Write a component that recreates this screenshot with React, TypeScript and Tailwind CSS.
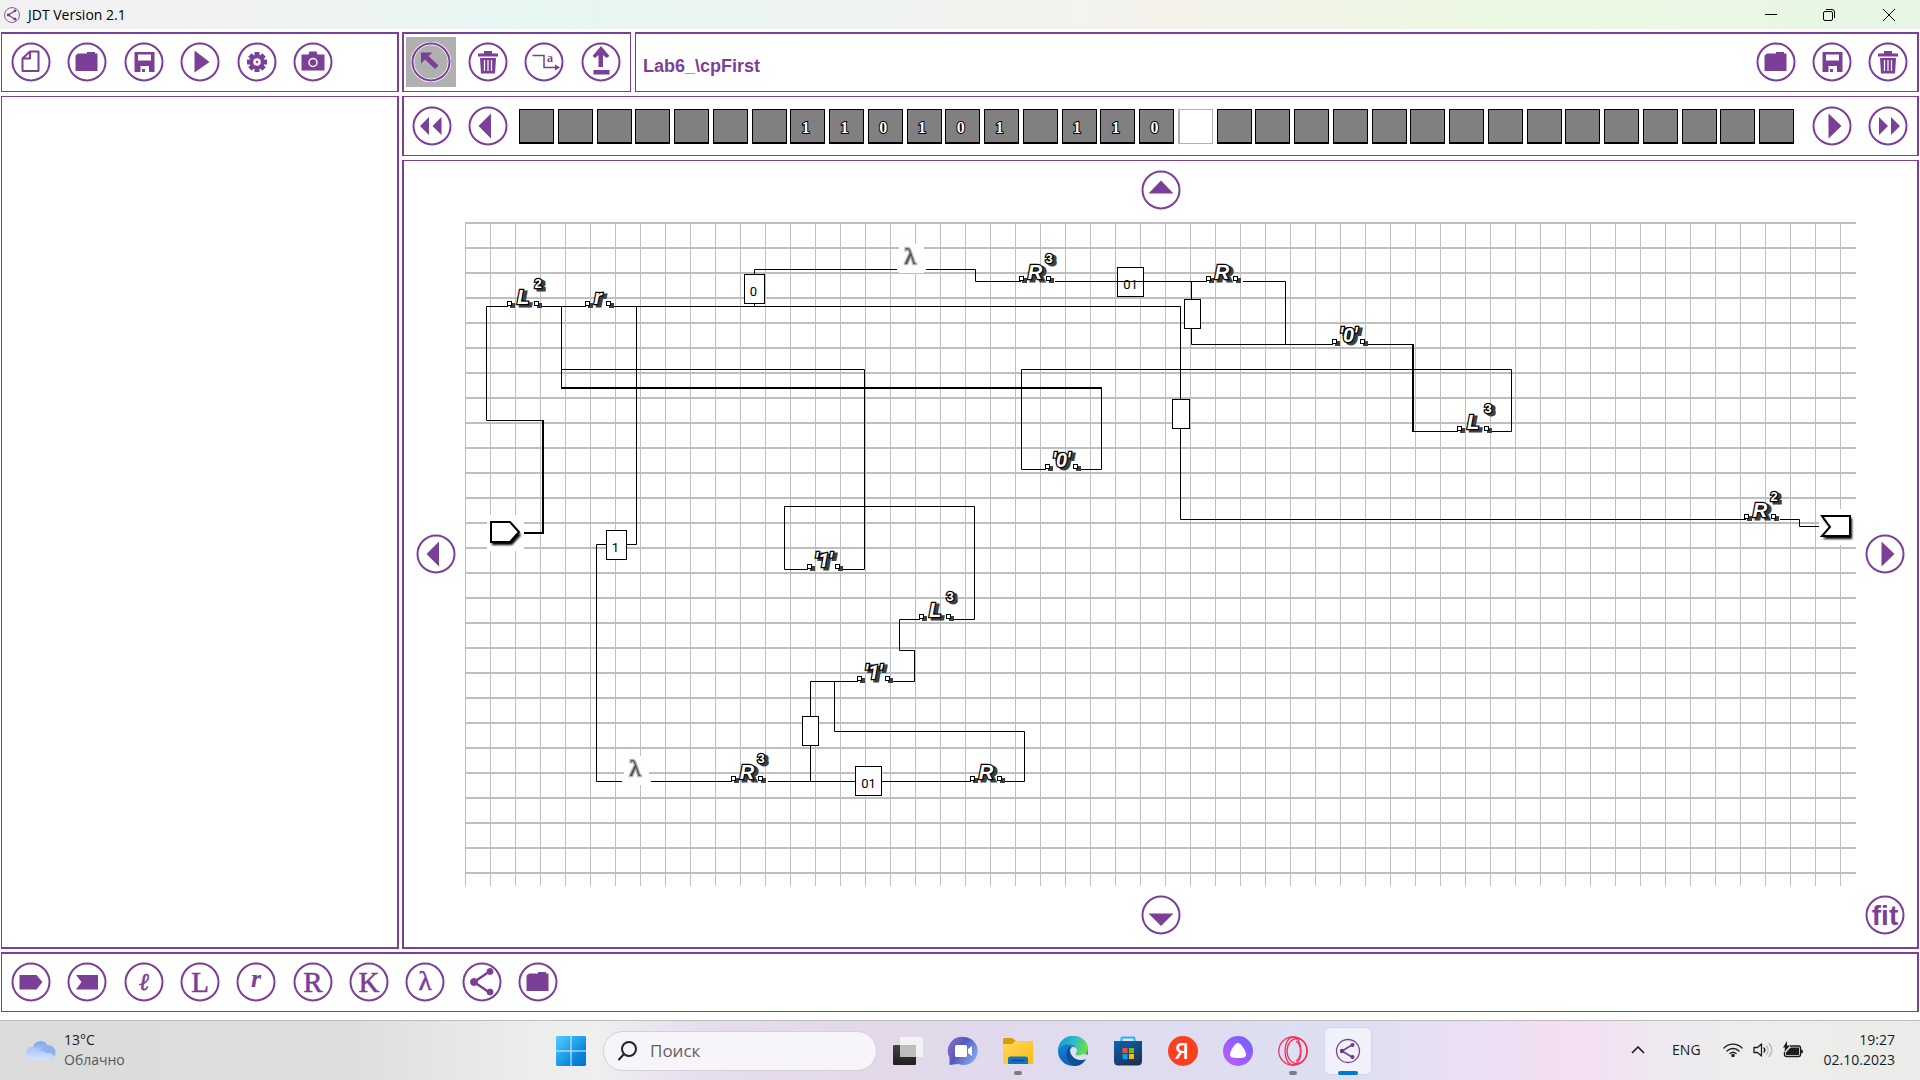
import React from "react";

const PURPLE = "#7c3f98";

type IconName =
  | "new" | "folder" | "save" | "play" | "gear" | "camera" | "arrow" | "trash" | "link" | "upload"
  | "rewind" | "back" | "forward" | "fastForward" | "up" | "down" | "start" | "end" | "share"
  | "ell" | "L" | "r" | "R" | "K" | "lambda" | "fit";

const GEAR_TEETH = [0, 45, 90, 135, 180, 225, 270, 315];

function Glyph({ text, size, y, bold, italic, sans }: { text: string; size: number; y: number; bold?: boolean; italic?: boolean; sans?: boolean }) {
  return (
    <text
      x="20"
      y={y}
      fontSize={size}
      textAnchor="middle"
      fill={PURPLE}
      stroke={PURPLE}
      strokeWidth={bold ? 0 : 0.6}
      fontWeight={bold ? 700 : 400}
      fontStyle={italic ? "italic" : "normal"}
      fontFamily={sans ? '"Liberation Sans", sans-serif' : '"Liberation Serif", serif'}
    >
      {text}
    </text>
  );
}

const ART: Record<IconName, React.ReactNode> = {
  new: <path d="M19 9.5h8.5v19.5h-16v-12.500z M19 9.500v7h-7.500" fill="none" stroke={PURPLE} strokeWidth="2" strokeLinejoin="round" />,
  folder: <path d="M20 11.500v-1.500h8v1.500h2.500v17.500H8.500v-15.500l2.500-2z" fill={PURPLE} />,
  save: (
    <g>
      <path d="M10.500 10h20v20h-20z" fill={PURPLE} />
      <path d="M14 12.500h13v6H14z M16.500 24h8.500v6h-8.500z" fill="#fff" />
      <path d="M18 27h3v3h-3z" fill={PURPLE} />
    </g>
  ),
  play: <path d="M14.500 8.500v22L29.500 20z" fill={PURPLE} />,
  gear: (
    <g fill={PURPLE}>
      {GEAR_TEETH.map((a) => (
        <rect key={a} x="17.500" y="10" width="5" height="5" transform={`rotate(${a} 20 20)`} />
      ))}
      <circle cx="20" cy="20" r="5.500" fill="none" stroke={PURPLE} strokeWidth="3.500" />
      <circle cx="20" cy="20" r="1.200" />
    </g>
  ),
  camera: (
    <g>
      <path d="M8.500 12.500h7l1-3h7l1 3h7v16h-23z" fill={PURPLE} />
      <circle cx="20" cy="20.500" r="4" fill={PURPLE} stroke="#fff" strokeWidth="1.500" />
    </g>
  ),
  arrow: <path d="M10 10.500h11.500l-4 3.500 10 9.500-3.500 3.500-10-9.500-4 4z" fill={PURPLE} />,
  trash: (
    <g>
      <path d="M10 11.500h6v-2.500h8v2.500h6v3h-20z" fill={PURPLE} />
      <path d="M12 16h16l-1 15.500h-14z" fill={PURPLE} />
      <path d="M16.500 18v11 M20 18v11 M23.500 18v11" stroke="#fff" strokeWidth="1.200" />
    </g>
  ),
  link: (
    <g>
      <path d="M8.500 13.500h11.500v12h12" fill="none" stroke={PURPLE} strokeWidth="1.500" />
      <path d="M31 22.500l5 3-5 3z" fill={PURPLE} />
      <text x="23" y="20" fontSize="12" fontWeight="700" fontFamily='"Liberation Serif", serif' fill={PURPLE}>a</text>
    </g>
  ),
  upload: <path d="M20 4l8.500 10-3 2-3.500-3v12h-4.500v-12l-3.500 3-2.500-2z M12.500 28h16v4.500h-16z" fill={PURPLE} />,
  rewind: <path d="M17 11v18L8 20z M29.500 11v18L20.500 20z" fill={PURPLE} />,
  back: <path d="M23 7.500v25L10.500 20z" fill={PURPLE} />,
  forward: <path d="M16.500 7.500v25L29.500 20z" fill={PURPLE} />,
  fastForward: <path d="M11 11v18l9-9z M23 11v18l9-9z" fill={PURPLE} />,
  up: <path d="M20 10.500L32.500 23.500h-25z" fill={PURPLE} />,
  down: <path d="M20 31L32.500 18.500h-25z" fill={PURPLE} />,
  start: <path d="M8.500 13h17l6 7-6 7.500h-17z" fill={PURPLE} />,
  end: <path d="M9 13h22v14.500H9l5.500-7.500z" fill={PURPLE} />,
  share: (
    <g stroke={PURPLE} fill={PURPLE}>
      <path d="M27.500 9.500L12 20l15.500 10.500" fill="none" strokeWidth="2.500" />
      <circle cx="28" cy="9.500" r="3" />
      <circle cx="12" cy="20" r="3.500" />
      <circle cx="28" cy="30" r="3" />
    </g>
  ),
  ell: <Glyph text="ℓ" size={24} y={28} italic />,
  L: <Glyph text="L" size={29} y={29.5} />,
  r: <Glyph text="r" size={26} y={25} bold italic />,
  R: <Glyph text="R" size={29} y={29.5} />,
  K: <Glyph text="K" size={29} y={29.5} />,
  lambda: <Glyph text="λ" size={27} y={28} />,
  fit: <Glyph text="fit" size={28} y={30} bold sans />,
};

function IconButton({ icon, label, selected }: { icon: IconName; label: string; selected?: boolean }) {
  return (
    <button
      type="button"
      aria-label={label}
      title={label}
      className={selected ? "grid size-[50px] shrink-0 place-items-center bg-[#b0b0b0]" : "grid size-[50px] shrink-0 place-items-center"}
    >
      <svg viewBox="0 0 40 40" className="size-10">
        {selected && <circle cx="20" cy="20" r="18.500" fill="none" stroke="#fff" strokeWidth="3.500" />}
        <circle cx="20" cy="20" r="18.500" fill="none" stroke={PURPLE} strokeWidth="2" />
        {ART[icon]}
      </svg>
    </button>
  );
}

function ShareLogo({ className }: { className: string }) {
  return (
    <svg viewBox="0 0 24 24" className={className} fill="none" stroke="#7a4790">
      <circle cx="12" cy="12" r="11.200" strokeWidth="1.300" />
      <path d="M16 6L6.500 12l9.500 6" strokeWidth="1.800" />
      <g fill="#6d3a84" stroke="none">
        <circle cx="16.500" cy="5.800" r="2" />
        <circle cx="6.500" cy="12" r="2.200" />
        <circle cx="16.500" cy="18.200" r="2" />
      </g>
    </svg>
  );
}

const TAPE = ["", "", "", "", "", "", "", "1", "1", "0", "1", "0", "1", "", "1", "1", "0"];
const TAPE_LENGTH = 33;
const HEAD = 17;

function Tape() {
  return (
    <div className="ml-1.5 mr-[13px] flex flex-1 justify-between">
      {Array.from({ length: TAPE_LENGTH }, (_, i) => (
        <button
          type="button"
          key={i}
          aria-label={`Cell ${i}`}
          className={
            i === HEAD
              ? "h-[35px] w-[35px] border border-l-2 border-[#b0b0b0] bg-white"
              : "h-[35px] w-[35px] border border-b-2 border-black bg-[#808080] pt-1 pr-1 text-center font-['Liberation_Serif',serif] text-base leading-5 font-bold text-white [paint-order:stroke_fill] [-webkit-text-stroke:2px_black]"
          }
        >
          {TAPE[i] ?? ""}
        </button>
      ))}
    </div>
  );
}

const WIRES = [
  "M542 420.500H486.500V306.500H508",
  "M541 306.500H586",
  "M614 306.500H1180.500V399",
  "M561.500 306V388",
  "M561 369.500H864.500V569.500H843",
  "M636.500 306V544.500H627",
  "M606 544.500H596.500V781.500H622",
  "M651 781.500H732",
  "M768 781.500H855",
  "M882 781.500H971",
  "M1005 781.500H1024.500V731.500H834.500V681",
  "M810.500 781V746",
  "M810.500 716V681.500H858",
  "M893 681.500H914.500V650.500H899.500V619.500H920",
  "M954 619.500H974.500V506.500H784.500V569.500H808",
  "M754.500 306V303",
  "M754.500 274V269.500H897",
  "M926 269.500H975.500V281.500H1021",
  "M1055 281.500H1207",
  "M1243 281.500H1285.500V344",
  "M1191.500 281V299",
  "M1191.500 329V344.500H1333",
  "M1368 344.500H1413",
  "M1413 431.500H1458",
  "M1491 431.500H1511.500V369.500H1021.500V469.500H1046",
  "M1080 469.500H1101.500V388",
  "M1180.500 429V519.500H1746",
  "M1780 519.500H1799.500V526.500H1819",
];

const THICK_WIRES = ["M524 533H543V420", "M561 388H1102", "M1413 344V432"];

const BOXES = [
  { x: 744, y: 274, w: 21, text: "0" },
  { x: 606, y: 530, w: 21, text: "1" },
  { x: 1117, y: 267, w: 27, text: "01" },
  { x: 855, y: 766, w: 27, text: "01" },
  { x: 1184, y: 299, w: 17, text: "" },
  { x: 1172, y: 399, w: 18, text: "" },
  { x: 802, y: 716, w: 17, text: "" },
];

const NODES = [
  { x: 507, y: 306, label: "L", sup: "2", span: 28 },
  { x: 585, y: 306, label: "r", sup: "", span: 22 },
  { x: 1019, y: 281, label: "R", sup: "3", span: 28 },
  { x: 1206, y: 281, label: "R", sup: "", span: 28 },
  { x: 1332, y: 344, label: "'0'", sup: "", span: 29 },
  { x: 1457, y: 431, label: "L", sup: "3", span: 28 },
  { x: 1045, y: 469, label: "'0'", sup: "", span: 29 },
  { x: 807, y: 569, label: "'1'", sup: "", span: 29 },
  { x: 919, y: 619, label: "L", sup: "3", span: 28 },
  { x: 857, y: 681, label: "'1'", sup: "", span: 29 },
  { x: 731, y: 781, label: "R", sup: "3", span: 28 },
  { x: 970, y: 781, label: "R", sup: "", span: 28 },
  { x: 1744, y: 519, label: "R", sup: "2", span: 28 },
];

const LAMBDAS = [
  { x: 899, y: 244 },
  { x: 624, y: 756 },
];

function Embossed({ x, y, size, text, upright }: { x: number; y: number; size: number; text: string; upright?: boolean }) {
  const quoted = text.length > 1;
  const common = {
    textAnchor: "middle" as const,
    fontSize: size,
    fontWeight: 700,
    fontFamily: quoted ? 'Roboto, "Liberation Sans", sans-serif' : '"Liberation Sans", sans-serif',
    fontStyle: upright ? "normal" : "italic",
  };
  return (
    <g>
      <text {...common} x={x + 3} y={y + 2} fill="#404040" stroke="#404040" strokeWidth="3" aria-hidden="true">{text}</text>
      <text {...common} x={x} y={y} fill="#fff" stroke="#000" strokeWidth="2.500" paintOrder="stroke">{text}</text>
    </g>
  );
}

function Dot({ x, y }: { x: number; y: number }) {
  return (
    <g>
      <rect x={x + 3} y={y + 2} width="5" height="5" fill="#404040" />
      <rect x={x + 0.5} y={y + 0.5} width="4" height="4" fill="#fff" stroke="#000" />
    </g>
  );
}

function Diagram() {
  return (
    <svg className="h-full w-full" role="img" aria-label="Machine diagram">
      <defs>
        <pattern id="grid" width="25" height="25" patternUnits="userSpaceOnUse">
          <path d="M0 0h25v2H0z M0 0h1v25H0z" fill="#bfbfbf" />
        </pattern>
        <filter id="soft" x="-30%" y="-30%" width="160%" height="160%">
          <feGaussianBlur stdDeviation="1" />
        </filter>
      </defs>
      <rect width="100%" height="100%" fill="url(#grid)" />
      <g transform="translate(-465 -222)">
        {BOXES.map((b, i) => (
          <rect key={i} x={b.x + 0.5} y={b.y + 0.5} width={b.w - 1} height="29" fill="#fff" stroke="#000" />
        ))}
        <path d={WIRES.join(" ")} fill="none" stroke="#000" />
        <path d={THICK_WIRES.join(" ")} fill="none" stroke="#000" strokeWidth="2" />
        {BOXES.map((b, i) => (
          <text key={i} x={b.x + b.w / 2 - (b.text.length === 1 ? 1 : 0)} y={b.y + 22} textAnchor="middle" fontSize="13" fontFamily='Roboto, "Liberation Sans", sans-serif'>
            {b.text}
          </text>
        ))}
        {LAMBDAS.map((l, i) => (
          <g key={i}>
            <rect x={l.x} y={l.y} width="25" height="29" fill="#fff" />
            <text x={l.x + 11} y={l.y + 20} textAnchor="middle" fontSize="24" fontFamily='"Liberation Serif", serif' fill="#4d4d4d" stroke="#b5b5b5" strokeWidth="2.500" paintOrder="stroke">
              λ
            </text>
          </g>
        ))}
        {NODES.map((n, i) => (
          <g key={i}>
            <Dot x={n.x} y={n.y - 5} />
            <Dot x={n.x + n.span - 1} y={n.y - 5} />
            <Embossed x={n.x + n.span / 2 + 2} y={n.y - 2} size={20} text={n.label} />
            {n.sup && <Embossed x={n.x + n.span + (n.label === "L" ? 3 : 2)} y={n.y - 18} size={13} text={n.sup} upright />}
          </g>
        ))}
        <rect x="487" y="515" width="37" height="36" fill="#fff" />
        <path d="M491 523h20l9 10-9 10h-20z" fill="#000" filter="url(#soft)" transform="translate(1 2)" />
        <path d="M491 522h19l9 10-9 10h-19z" fill="#fff" stroke="#000" strokeWidth="2" />
        <rect x="1819" y="509" width="37" height="36" fill="#fff" />
        <path d="M1822 516h29v21h-29l8-10z" fill="#000" filter="url(#soft)" transform="translate(1 2)" />
        <path d="M1822 516h28v20h-28l8-9z" fill="#fff" stroke="#000" strokeWidth="2" />
      </g>
    </svg>
  );
}

function TitleBar() {
  return (
    <header className="flex h-[29px] shrink-0 items-center bg-[linear-gradient(90deg,#f1f1f1_0%,#f1f2f2_12%,#e6f6f2_28%,#eef4f1_42%,#f5f2ec_60%,#ebf7e1_78%,#e8f6e6_100%)] pl-1 text-black">
      <ShareLogo className="size-4" />
      <h1 className="ml-2 font-['Open_Sans',sans-serif] text-[14px] leading-4">JDT Version 2.1</h1>
      <div className="ml-auto flex h-full">
        <button type="button" aria-label="Minimize" className="grid w-[58px] place-items-center">
          <svg viewBox="0 0 12 12" className="size-3" stroke="#000"><path d="M0 5.500h12" /></svg>
        </button>
        <button type="button" aria-label="Restore" className="grid w-[58px] place-items-center">
          <svg viewBox="0 0 12 12" className="size-3" stroke="#000" fill="none">
            <rect x="0.500" y="2.500" width="9" height="9" rx="1.500" />
            <path d="M3 0.500h6a2.500 2.500 0 0 1 2.500 2.500v6" />
          </svg>
        </button>
        <button type="button" aria-label="Close" className="grid w-[62px] place-items-center">
          <svg viewBox="0 0 12 12" className="size-3" stroke="#000"><path d="M0 0l12 12M12 0L0 12" /></svg>
        </button>
      </div>
    </header>
  );
}

function TaskIcon({ label, active, running, children }: { label: string; active?: boolean; running?: boolean; children: React.ReactNode }) {
  return (
    <button
      type="button"
      aria-label={label}
      className={
        active
          ? "relative grid h-12 w-12 place-items-center rounded-md border border-[#d8d6e6] bg-[#f1f1fa]"
          : "relative grid h-12 w-12 place-items-center"
      }
    >
      <svg viewBox="0 0 30 30" className="size-[30px] overflow-visible">{children}</svg>
      {running && <span className="absolute bottom-0 left-5 h-1 w-2 rounded-full bg-[#7c7a83]" />}
      {active && <span className="absolute -bottom-px left-[13px] h-1 w-5 rounded-full bg-[#0078d4]" />}
    </button>
  );
}

function TaskBar() {
  return (
    <footer className="grid h-[60px] shrink-0 grid-cols-[1fr_auto_1fr] items-center border-t border-[#bdbdbd] bg-[linear-gradient(90deg,#dbdbdb_0%,#dedede_18%,#ebecec_27%,#efeff0_31%,#e5dcee_37%,#e2d8ea_47%,#dfdcee_57%,#dddff1_70%,#ebdff3_76%,#f4def4_82%,#eeeaf0_87%,#eceeec_93%,#ebecea_100%)] font-['Open_Sans',sans-serif] text-[15px] leading-5 text-[#1b1b1b]">
      <button type="button" className="ml-6 flex items-center gap-2 justify-self-start pb-0.5 text-left">
        <svg viewBox="0 0 32 26" className="h-[26px] w-8">
          <defs>
            <linearGradient id="cloud" x1="0" y1="0" x2="0" y2="1">
              <stop offset="0" stopColor="#7aa5ee" /><stop offset="1" stopColor="#c4dbfb" />
            </linearGradient>
            <linearGradient id="cloudFront" x1="0" y1="0" x2="0" y2="1">
              <stop offset="0" stopColor="#a6c4f5" /><stop offset="1" stopColor="#d2e3fc" />
            </linearGradient>
          </defs>
          <path d="M9 10a8 8 0 0 1 15-1l-3 10H9z" fill="url(#cloud)" />
          <circle cx="24" cy="15.500" r="7.500" fill="#8db1ef" />
          <path d="M8 10a7 7 0 0 1 6.500 5c3-2 6.500-1 7.500 1 4-1 7 1 8 3-1 2.500-3 4-6 4H8A6.500 6.500 0 0 1 8 10z" fill="url(#cloudFront)" />
        </svg>
        <span className="text-[14px]">
          <span className="block">13°C</span>
          <span className="block text-[#575757]">Облачно</span>
        </span>
      </button>

      <nav className="flex items-center gap-[7px] pl-2" aria-label="Taskbar">
        <button type="button" aria-label="Start" className="grid h-12 w-[30px] place-items-center">
          <svg viewBox="0 0 30 30" className="size-[30px]">
            <defs>
              <linearGradient id="win" x1="0" y1="0" x2="1" y2="1">
                <stop offset="0" stopColor="#4fd0ff" /><stop offset="0.700" stopColor="#0a86dc" /><stop offset="1" stopColor="#0073cf" />
              </linearGradient>
            </defs>
            <path d="M1 0h13.500v14.500H0V1z M15.500 0H29l1 1v13.500H15.500z M0 15.500h14.500V30H1l-1-1z M15.500 15.500H30V29l-1 1H15.500z" fill="url(#win)" />
          </svg>
        </button>
        <label className="ml-2.5 flex h-10 w-[274px] items-center gap-3 rounded-full border border-[#d4cfd8] bg-[#f7f5fa] pl-3.5">
          <svg viewBox="0 0 20 20" className="size-5 shrink-0" fill="none" stroke="#222" strokeWidth="2" strokeLinecap="round">
            <circle cx="11" cy="8" r="7" /><path d="M6 13l-5 5.500" />
          </svg>
          <input type="text" placeholder="Поиск" aria-label="Поиск" className="w-full bg-transparent text-[17px] outline-none placeholder:text-[#5f5f62]" />
        </label>
        <TaskIcon label="Task view">
          <defs>
            <linearGradient id="tv" x1="0" y1="0" x2="0" y2="1"><stop offset="0" stopColor="#444" /><stop offset="1" stopColor="#1e1e1e" /></linearGradient>
          </defs>
          <rect x="0" y="9" width="23" height="20" rx="1" fill="url(#tv)" />
          <rect x="7" y="1" width="23" height="20" rx="1" fill="#f2f2f2" />
          <path d="M7 9h16v12H8l-1-1z" fill="#bdbdbd" />
        </TaskIcon>
        <TaskIcon label="Chat">
          <defs>
            <linearGradient id="chat" x1="0" y1="0" x2="1" y2="0.600"><stop offset="0" stopColor="#8f72b8" /><stop offset="0.500" stopColor="#5558c4" /><stop offset="1" stopColor="#7fa4ea" /></linearGradient>
          </defs>
          <path d="M15.500 1a14 14 0 1 1-5 27l-9 1v-7.500A14 14 0 0 1 15.500 1z" fill="url(#chat)" />
          <rect x="7" y="9" width="12" height="12" rx="1.500" fill="#fff" />
          <path d="M20 13l4-3v10l-4-3z" fill="#fff" />
        </TaskIcon>
        <TaskIcon label="File Explorer" running>
          <defs>
            <linearGradient id="fold" x1="0" y1="0" x2="1" y2="1"><stop offset="0" stopColor="#ffd75e" /><stop offset="1" stopColor="#fbbc13" /></linearGradient>
          </defs>
          <path d="M0 9V3.500Q0 2 1.500 2H9l4 3-3 4z" fill="#d99a07" />
          <path d="M0 8h9l3-3h18v23H0z" fill="url(#fold)" />
          <path d="M5 28v-5q0-2.500 2.500-2.500h15Q25 20.500 25 23v5z" fill="#1273c6" />
          <path d="M9 24.500h12" stroke="#0b4f8f" strokeWidth="1.500" strokeLinecap="round" />
        </TaskIcon>
        <TaskIcon label="Edge">
          <defs>
            <linearGradient id="edgeTop" x1="0" y1="0" x2="1" y2="0.300"><stop offset="0" stopColor="#1590d8" /><stop offset="0.600" stopColor="#2dc1c4" /><stop offset="1" stopColor="#66dd4a" /></linearGradient>
            <linearGradient id="edgeSide" x1="0" y1="0" x2="0.500" y2="1"><stop offset="0" stopColor="#1b8fe0" /><stop offset="1" stopColor="#0d5cb0" /></linearGradient>
          </defs>
          <circle cx="15" cy="15" r="15" fill="url(#edgeSide)" />
          <path d="M0 14C1 5 7 0 15 0c9 0 15 6 15 12.500 0 5-3.500 8-8 8-4 0-5-1.500-4-3 3-4-1-9-7-9C6 8.500 1.500 10.500 0 14z" fill="url(#edgeTop)" />
          <path d="M11 11c-5 5-2.500 16 6 19 4 .5 8-2 11-6.500-3 1.500-7 1-9.500-.5C14 20.500 10.500 16 14 11.500z" fill="#104f95" />
          <path d="M18 17.500c3-4-1-8-4-6.500-4 3-1 9 3 11.500 4 2 8 2 11 .5l3-4-5-1c-3.500 2-10 2-8-.5z" fill="#dfdff1" />
        </TaskIcon>
        <TaskIcon label="Store">
          <defs>
            <linearGradient id="store" x1="0" y1="0" x2="0.500" y2="1"><stop offset="0" stopColor="#0a66b4" /><stop offset="1" stopColor="#1e3457" /></linearGradient>
          </defs>
          <path d="M8.500 6V2.500Q8.500 1.500 9.500 1.500h11q1 0 1 1V6" fill="none" stroke="#22b5f2" strokeWidth="2" />
          <path d="M1 5h28v20q0 4.500-4.500 4.500h-19Q1 29.500 1 25z" fill="url(#store)" />
          <path d="M9.500 12h5v5h-5z" fill="#f35325" /><path d="M16 12h5v5h-5z" fill="#81bc06" />
          <path d="M9.500 18h5v5h-5z" fill="#05a6f0" /><path d="M16 18h5v5h-5z" fill="#ffba08" />
        </TaskIcon>
        <TaskIcon label="Yandex">
          <circle cx="15" cy="15" r="15" fill="#fc3f1d" />
          <text x="14" y="23" textAnchor="middle" fontSize="22" fontWeight="600" fontFamily='"Open Sans", sans-serif' fill="#fff">Я</text>
        </TaskIcon>
        <TaskIcon label="Alice">
          <defs>
            <linearGradient id="alice" x1="1" y1="0" x2="0" y2="1"><stop offset="0" stopColor="#6a63ff" /><stop offset="1" stopColor="#c55cff" /></linearGradient>
          </defs>
          <circle cx="15" cy="15" r="15" fill="url(#alice)" />
          <path d="M15 7c3 0 8 8 8 11.500S19 22 15 22s-8 0-8-3.500S12 7 15 7z" fill="#fff" />
        </TaskIcon>
        <TaskIcon label="Opera" running>
          <g fill="none" stroke="#f5305c" strokeWidth="1.300">
            <circle cx="15" cy="15" r="14.200" />
            <ellipse cx="15" cy="15" rx="8" ry="14" />
            <ellipse cx="19" cy="15" rx="10" ry="12.500" />
            <path d="M18 5c6 4 6 16 0 20" />
          </g>
        </TaskIcon>
        <TaskIcon label="JDT" active>
          <g fill="none" stroke="#7a4790">
            <circle cx="15" cy="15" r="11.500" strokeWidth="1.300" />
            <path d="M19 9L9 15l10 6" strokeWidth="1.800" />
            <g fill="#6d3a84" stroke="none">
              <circle cx="19.500" cy="9" r="2" /><circle cx="9" cy="15" r="2.200" /><circle cx="19.500" cy="21" r="2" />
            </g>
          </g>
        </TaskIcon>
      </nav>

      <div className="mr-[25px] flex items-center justify-self-end pb-0.5">
        <button type="button" aria-label="Show hidden icons" className="mr-[27px]">
          <svg viewBox="0 0 14 8" className="h-2 w-3.5" fill="none" stroke="#1b1b1b" strokeWidth="1.600"><path d="M1 7l6-6 6 6" /></svg>
        </button>
        <button type="button" className="mr-[22px] text-[14px]">ENG</button>
        <button type="button" aria-label="Network, volume and battery" className="mr-[21px] flex items-center gap-2.5">
          <svg viewBox="0 0 20 15" className="h-[15px] w-5" fill="none" stroke="#1b1b1b" strokeWidth="1.400" strokeLinecap="round">
            <path d="M1 6a12.500 12.500 0 0 1 18 0M4 9a8.500 8.500 0 0 1 12 0M7 11.500a4.500 4.500 0 0 1 6 0" />
            <circle cx="10" cy="13.500" r="1" fill="#1b1b1b" />
          </svg>
          <svg viewBox="0 0 20 16" className="h-4 w-5" fill="none" stroke="#1b1b1b" strokeWidth="1.300" strokeLinecap="round" strokeLinejoin="round">
            <path d="M1 5.500h3.500L8.500 2v12l-4-3.500H1z" /><path d="M11 6a3 3 0 0 1 0 4" />
            <path d="M13.500 4a6 6 0 0 1 0 8M16 1.500a9 9 0 0 1 0 13" stroke="#b5b5b5" />
          </svg>
          <svg viewBox="0 0 20 17" className="h-[17px] w-5">
            <path d="M7 5h8.500q2 0 2 2v6.500q0 2-2 2h-12q-2 0-2-2V11" fill="none" stroke="#1b1b1b" strokeWidth="1.400" />
            <path d="M7.500 6.500H16v7.500H3v-2.500zM18 8.500q2 0 2 2t-2 2z M4 0v4.500h3L1.500 11 2 6.500H0z" fill="#1b1b1b" />
          </svg>
        </button>
        <time className="text-right text-[14px]">
          <span className="block">19:27</span>
          <span className="block">02.10.2023</span>
        </time>
      </div>
    </footer>
  );
}

export default function App() {
  return (
    <div className="flex min-h-screen flex-col bg-white">
      <TitleBar />

      <main className="flex flex-1 flex-col gap-[3px] px-px pt-[3px] pb-2">
        <div className="flex flex-1 gap-[3px]">
          <aside className="flex w-[398px] shrink-0 flex-col gap-1">
            <div className="h-[60px] border border-t-2 border-r-2 border-[#7c3f98] pt-[3px] pl-1">
              <div className="flex w-[332px] justify-between">
                <IconButton icon="new" label="New" />
                <IconButton icon="folder" label="Open" />
                <IconButton icon="save" label="Save" />
                <IconButton icon="play" label="Run" />
                <IconButton icon="gear" label="Settings" />
                <IconButton icon="camera" label="Snapshot" />
              </div>
            </div>
            <div className="flex-1 border border-r-2 border-b-2 border-[#7c3f98]" />
          </aside>

          <section className="flex min-w-0 flex-1 flex-col gap-1">
            <div className="flex h-[60px] gap-1">
              <div className="flex w-[229px] shrink-0 justify-between border border-t-2 border-l-2 border-[#7c3f98] pt-[3px] pr-1 pl-0.5">
                <IconButton icon="arrow" label="Select" selected />
                <IconButton icon="trash" label="Delete" />
                <IconButton icon="link" label="Connect" />
                <IconButton icon="upload" label="Go up" />
              </div>
              <div className="flex flex-1 items-start justify-between border border-t-2 border-r-2 border-[#7c3f98] pt-[3px] pr-1 pl-[7px]">
                <h2 className="pt-[17px] font-['Liberation_Sans',sans-serif] text-lg leading-6 font-bold text-[#7c3f98]">Lab6_\cpFirst</h2>
                <div className="flex w-[162px] justify-between">
                  <IconButton icon="folder" label="Open machine" />
                  <IconButton icon="save" label="Save machine" />
                  <IconButton icon="trash" label="Delete machine" />
                </div>
              </div>
            </div>

            <div className="flex h-[60px] items-center border border-x-2 border-[#7c3f98] pr-1 pl-[3px]">
              <div className="flex w-[106px] justify-between">
                <IconButton icon="rewind" label="Tape to start" />
                <IconButton icon="back" label="Tape left" />
              </div>
              <Tape />
              <div className="flex w-[106px] justify-between">
                <IconButton icon="forward" label="Tape right" />
                <IconButton icon="fastForward" label="Tape to end" />
              </div>
            </div>

            <div className="grid flex-1 grid-cols-[61px_minmax(0,1fr)_61px] grid-rows-[61px_minmax(0,1fr)_61px] place-items-center border-2 border-t border-[#7c3f98]">
              <div className="col-start-2 pb-[3px]"><IconButton icon="up" label="Scroll up" /></div>
              <div className="col-start-1 row-start-2 pl-0.5"><IconButton icon="back" label="Scroll left" /></div>
              <div className="col-start-2 row-start-2 h-full w-full"><Diagram /></div>
              <div className="col-start-3 row-start-2 pr-[3px]"><IconButton icon="forward" label="Scroll right" /></div>
              <div className="col-start-2 row-start-3 pb-[3px]"><IconButton icon="down" label="Scroll down" /></div>
              <div className="col-start-3 row-start-3 pr-[3px] pb-[3px]"><IconButton icon="fit" label="Fit to window" /></div>
            </div>
          </section>
        </div>

        <div className="h-[60px] border border-t-2 border-r-2 border-[#7c3f98] pt-[3px] pl-1">
          <div className="flex w-[557px] justify-between">
            <IconButton icon="start" label="Entry" />
            <IconButton icon="end" label="Exit" />
            <IconButton icon="ell" label="Step left" />
            <IconButton icon="L" label="Search left" />
            <IconButton icon="r" label="Step right" />
            <IconButton icon="R" label="Search right" />
            <IconButton icon="K" label="Copy" />
            <IconButton icon="lambda" label="Write empty" />
            <IconButton icon="share" label="Branch" />
            <IconButton icon="folder" label="Insert machine" />
          </div>
        </div>
      </main>

      <TaskBar />
    </div>
  );
}
